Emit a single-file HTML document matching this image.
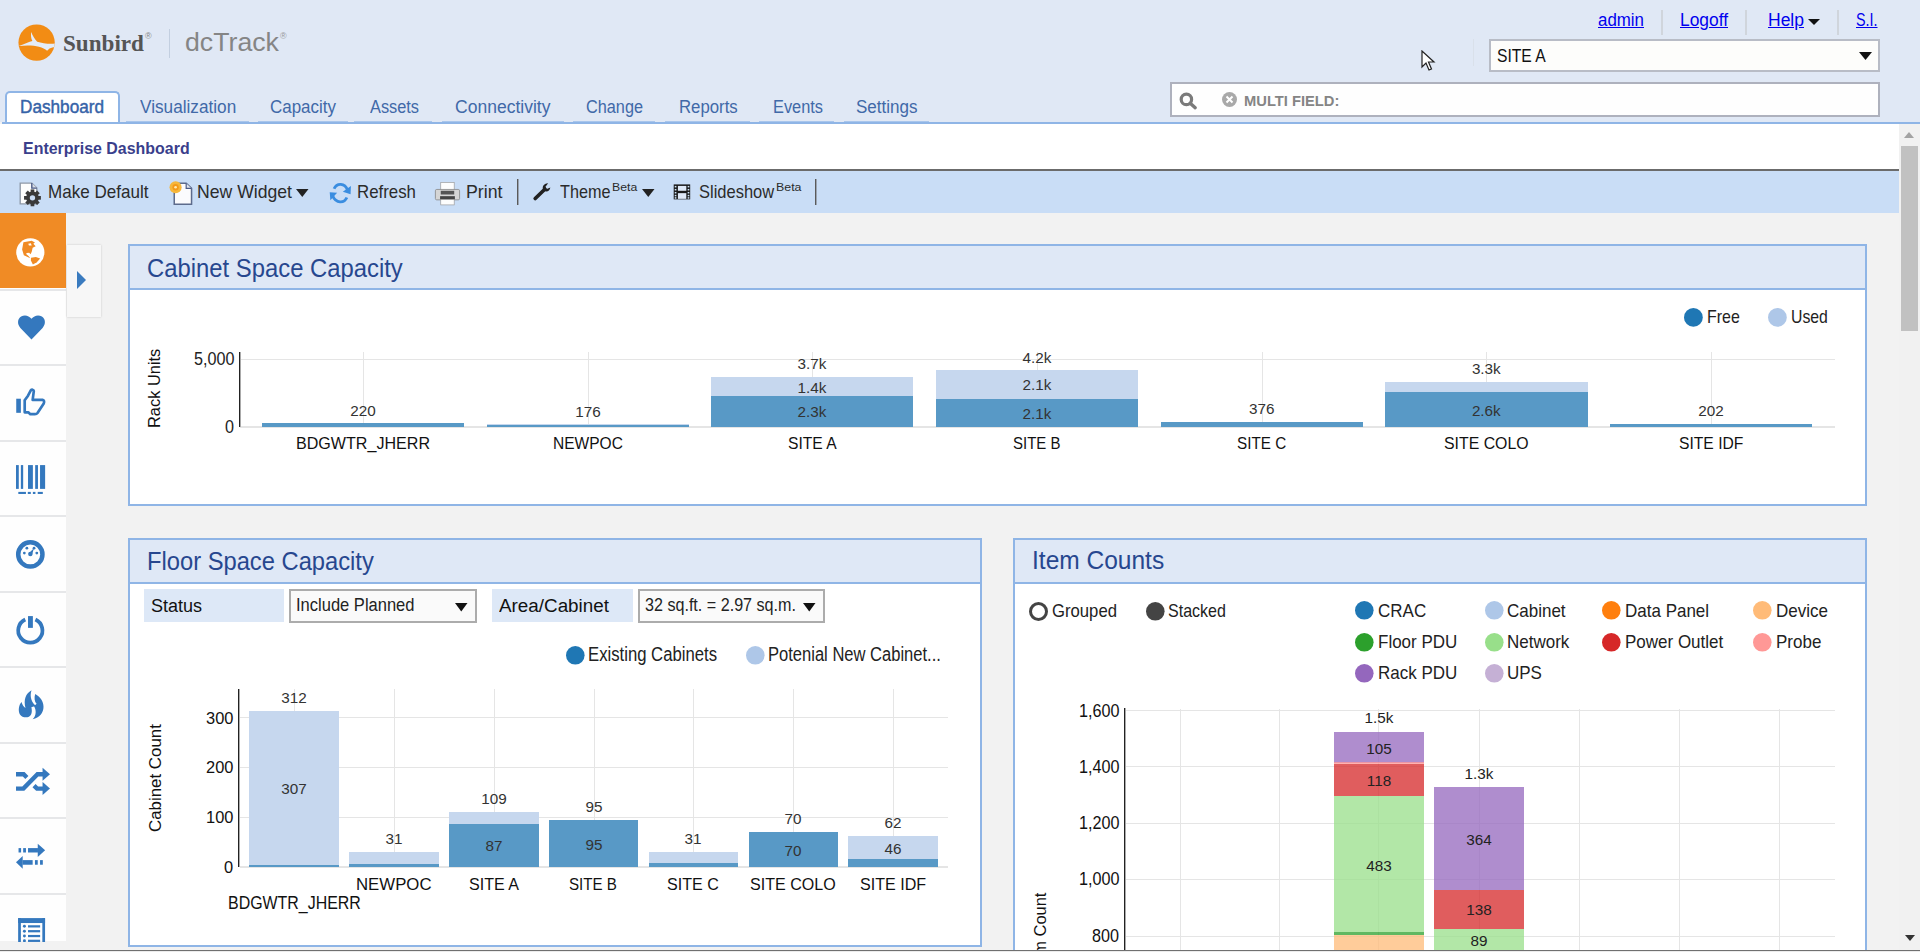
<!DOCTYPE html><html><head><meta charset="utf-8"><style>
html,body{margin:0;padding:0;width:1920px;height:952px;overflow:hidden;background:#f2f2f2;font-family:"Liberation Sans",sans-serif;}
.t{position:absolute;white-space:nowrap;transform-origin:0 0;}
.r{position:absolute;}
</style></head><body>
<div class="r" style="left:0px;top:0px;width:1920px;height:122px;background:#e0e8f5;"></div>
<svg class="r" style="left:16px;top:22px" width="42" height="42" viewBox="0 0 952 952">
<defs><clipPath id="lc"><circle cx="467" cy="467" r="412"/></clipPath></defs>
<circle cx="467" cy="467" r="412" fill="#f28c14"/>
<path clip-path="url(#lc)" d="M345,225 C330,300 345,380 372,432 C300,452 200,500 60,545 C250,520 400,530 520,560 C600,580 660,610 705,650 L760,600 C810,585 860,575 900,565 L900,485 C760,505 600,480 480,445 C420,385 370,300 345,225 Z" fill="#e4ecf7"/>
</svg>
<div class="t" style="left:63.0px;top:32.0px;font-size:23.87px;line-height:23.87px;color:#555;font-weight:700;font-family:'Liberation Serif', serif;transform:scaleX(0.969);">Sunbird</div>
<div class="t" style="left:145.0px;top:32.0px;font-size:9.00px;line-height:9.00px;color:#888;font-weight:400;font-family:'Liberation Sans', sans-serif;transform:scaleX(1.000);">&#174;</div>
<div class="r" style="left:169px;top:29px;width:1px;height:29px;background:#c3cfe0;"></div>
<div class="r" style="left:1473px;top:39px;width:1px;height:27px;background:#d9e0ea;"></div>
<div class="t" style="left:185.0px;top:30.0px;font-size:25.87px;line-height:25.87px;color:#858585;font-weight:400;font-family:'Liberation Sans', sans-serif;transform:scaleX(1.032);">dcTrack</div>
<div class="t" style="left:280.0px;top:32.0px;font-size:9.00px;line-height:9.00px;color:#999;font-weight:400;font-family:'Liberation Sans', sans-serif;transform:scaleX(1.000);">&#174;</div>
<div class="t" style="left:1598.0px;top:12.0px;font-size:17.50px;line-height:17.50px;color:#0000ee;font-weight:400;font-family:'Liberation Sans', sans-serif;transform:scaleX(0.965);text-decoration:underline;text-underline-offset:1px;">admin</div>
<div class="t" style="left:1680.0px;top:12.0px;font-size:17.50px;line-height:17.50px;color:#0000ee;font-weight:400;font-family:'Liberation Sans', sans-serif;transform:scaleX(0.993);text-decoration:underline;text-underline-offset:1px;">Logoff</div>
<div class="t" style="left:1768.0px;top:12.0px;font-size:17.50px;line-height:17.50px;color:#0000ee;font-weight:400;font-family:'Liberation Sans', sans-serif;transform:scaleX(1.000);text-decoration:underline;text-underline-offset:1px;">Help</div>
<div class="t" style="left:1856.0px;top:12.0px;font-size:17.50px;line-height:17.50px;color:#0000ee;font-weight:400;font-family:'Liberation Sans', sans-serif;transform:scaleX(0.819);text-decoration:underline;text-underline-offset:1px;">S.I.</div>
<svg class="r" style="left:1808px;top:19px" width="13" height="7"><path d="M0 0H12L6 6Z" fill="#111"/></svg>
<div class="r" style="left:1661px;top:10px;width:2px;height:25px;background:#d0d5dc;"></div>
<div class="r" style="left:1745px;top:10px;width:2px;height:25px;background:#d0d5dc;"></div>
<div class="r" style="left:1837px;top:10px;width:2px;height:25px;background:#d0d5dc;"></div>
<div class="r" style="left:1489px;top:39px;width:391px;height:33px;background:#fdfdfb;border:2px solid #b8bcc6;box-sizing:border-box;"></div>
<div class="t" style="left:1496.5px;top:47.0px;font-size:18.80px;line-height:18.80px;color:#111;font-weight:400;font-family:'Liberation Sans', sans-serif;transform:scaleX(0.834);">SITE A</div>
<svg class="r" style="left:1859px;top:52px" width="14" height="9"><path d="M0 0H13L6.5 8Z" fill="#111"/></svg>
<svg class="r" style="left:1421px;top:50px" width="16" height="22" viewBox="0 0 16 22"><path d="M1 1 L1 17 L5 13 L8 20 L10.5 19 L7.5 12 L13 12 Z" fill="#fff" stroke="#222" stroke-width="1.2"/></svg>
<div class="r" style="left:1170px;top:82px;width:710px;height:35px;background:#fefefe;border:2px solid #aeb1bd;box-sizing:border-box;"></div>
<svg class="r" style="left:1177px;top:90px" width="22" height="22" viewBox="0 0 22 22"><circle cx="9.4" cy="9.4" r="5.2" fill="none" stroke="#7a7a7a" stroke-width="3.2"/><path d="M13.2 13.2 L18.2 17.7" stroke="#7a7a7a" stroke-width="3.4" stroke-linecap="round"/></svg>
<svg class="r" style="left:1221px;top:91px" width="17" height="17" viewBox="0 0 17 17"><circle cx="8.5" cy="8.5" r="7.5" fill="#a9a9a9"/><path d="M5.5 5.5 L11.5 11.5 M11.5 5.5 L5.5 11.5" stroke="#fff" stroke-width="2"/></svg>
<div class="t" style="left:1243.7px;top:93.0px;font-size:15.41px;line-height:15.41px;color:#858585;font-weight:700;font-family:'Liberation Sans', sans-serif;transform:scaleX(0.955);">MULTI FIELD:</div>
<div class="r" style="left:5px;top:91px;width:115px;height:32px;background:#fff;border:2px solid #8fb5e6;border-bottom:none;border-radius:5px 5px 0 0;box-sizing:border-box;"></div>
<div class="r" style="left:0px;top:124px;width:1899px;height:45px;background:#ffffff;"></div>
<div class="r" style="left:2px;top:122px;width:1918px;height:2px;background:#8fb5e6;"></div>
<div class="t" style="left:20.0px;top:98.0px;font-size:18.90px;line-height:18.90px;color:#3563a8;font-weight:400;font-family:'Liberation Sans', sans-serif;transform:scaleX(0.909);-webkit-text-stroke:0.45px #3563a8;">Dashboard</div>
<div class="t" style="left:139.5px;top:98.0px;font-size:18.90px;line-height:18.90px;color:#4169a8;font-weight:400;font-family:'Liberation Sans', sans-serif;transform:scaleX(0.910);">Visualization</div>
<div class="r" style="left:126px;top:121px;width:123px;height:1px;background:#a9c6ec;"></div>
<div class="t" style="left:270.0px;top:98.0px;font-size:18.90px;line-height:18.90px;color:#4169a8;font-weight:400;font-family:'Liberation Sans', sans-serif;transform:scaleX(0.898);">Capacity</div>
<div class="r" style="left:258px;top:121px;width:90px;height:1px;background:#a9c6ec;"></div>
<div class="t" style="left:370.0px;top:98.0px;font-size:18.90px;line-height:18.90px;color:#4169a8;font-weight:400;font-family:'Liberation Sans', sans-serif;transform:scaleX(0.864);">Assets</div>
<div class="r" style="left:354px;top:121px;width:78px;height:1px;background:#a9c6ec;"></div>
<div class="t" style="left:455.0px;top:98.0px;font-size:18.90px;line-height:18.90px;color:#4169a8;font-weight:400;font-family:'Liberation Sans', sans-serif;transform:scaleX(0.928);">Connectivity</div>
<div class="r" style="left:442px;top:121px;width:122px;height:1px;background:#a9c6ec;"></div>
<div class="t" style="left:586.0px;top:98.0px;font-size:18.90px;line-height:18.90px;color:#4169a8;font-weight:400;font-family:'Liberation Sans', sans-serif;transform:scaleX(0.861);">Change</div>
<div class="r" style="left:573px;top:121px;width:82px;height:1px;background:#a9c6ec;"></div>
<div class="t" style="left:678.8px;top:98.0px;font-size:18.90px;line-height:18.90px;color:#4169a8;font-weight:400;font-family:'Liberation Sans', sans-serif;transform:scaleX(0.888);">Reports</div>
<div class="r" style="left:665px;top:121px;width:85px;height:1px;background:#a9c6ec;"></div>
<div class="t" style="left:772.5px;top:98.0px;font-size:18.90px;line-height:18.90px;color:#4169a8;font-weight:400;font-family:'Liberation Sans', sans-serif;transform:scaleX(0.866);">Events</div>
<div class="r" style="left:759px;top:121px;width:75px;height:1px;background:#a9c6ec;"></div>
<div class="t" style="left:856.0px;top:98.0px;font-size:18.90px;line-height:18.90px;color:#4169a8;font-weight:400;font-family:'Liberation Sans', sans-serif;transform:scaleX(0.901);">Settings</div>
<div class="r" style="left:844px;top:121px;width:85px;height:1px;background:#a9c6ec;"></div>
<div class="t" style="left:22.7px;top:140.0px;font-size:17.08px;line-height:17.08px;color:#3a3f8c;font-weight:700;font-family:'Liberation Sans', sans-serif;transform:scaleX(0.934);">Enterprise Dashboard</div>
<div class="r" style="left:0px;top:169px;width:1899px;height:2px;background:#6b6b6b;"></div>
<div class="r" style="left:0px;top:171px;width:1899px;height:42px;background:#c9ddf6;"></div>
<div class="t" style="left:47.5px;top:184.0px;font-size:17.73px;line-height:17.73px;color:#2b2b2b;font-weight:400;font-family:'Liberation Sans', sans-serif;transform:scaleX(0.962);">Make Default</div>
<div class="t" style="left:197.0px;top:184.0px;font-size:17.73px;line-height:17.73px;color:#2b2b2b;font-weight:400;font-family:'Liberation Sans', sans-serif;transform:scaleX(0.994);">New Widget</div>
<div class="t" style="left:357.0px;top:184.0px;font-size:17.73px;line-height:17.73px;color:#2b2b2b;font-weight:400;font-family:'Liberation Sans', sans-serif;transform:scaleX(0.950);">Refresh</div>
<div class="t" style="left:465.5px;top:184.0px;font-size:17.73px;line-height:17.73px;color:#2b2b2b;font-weight:400;font-family:'Liberation Sans', sans-serif;transform:scaleX(1.001);">Print</div>
<div class="t" style="left:559.5px;top:184.0px;font-size:17.73px;line-height:17.73px;color:#2b2b2b;font-weight:400;font-family:'Liberation Sans', sans-serif;transform:scaleX(0.915);">Theme</div>
<div class="t" style="left:611.8px;top:181.0px;font-size:11.77px;line-height:11.77px;color:#2b2b2b;font-weight:400;font-family:'Liberation Sans', sans-serif;transform:scaleX(1.043);">Beta</div>
<div class="t" style="left:698.8px;top:184.0px;font-size:17.73px;line-height:17.73px;color:#2b2b2b;font-weight:400;font-family:'Liberation Sans', sans-serif;transform:scaleX(0.931);">Slideshow</div>
<div class="t" style="left:775.5px;top:181.0px;font-size:11.77px;line-height:11.77px;color:#2b2b2b;font-weight:400;font-family:'Liberation Sans', sans-serif;transform:scaleX(1.053);">Beta</div>
<div class="r" style="left:517px;top:179px;width:1px;height:26px;background:#5a5a5a;"></div>
<div class="r" style="left:518px;top:179px;width:1px;height:26px;background:#9aa4b2;"></div>
<div class="r" style="left:815px;top:179px;width:1px;height:26px;background:#5a5a5a;"></div>
<div class="r" style="left:816px;top:179px;width:1px;height:26px;background:#9aa4b2;"></div>
<svg class="r" style="left:296px;top:189px" width="13" height="9"><path d="M0 0H12.5L6.25 8Z" fill="#222"/></svg>
<svg class="r" style="left:642px;top:189px" width="13" height="9"><path d="M0 0H12.5L6.25 8Z" fill="#222"/></svg>
<div class="r" style="left:0px;top:213px;width:1899px;height:737px;background:#f2f2f2;"></div>
<div class="r" style="left:0px;top:213px;width:66px;height:728px;background:#fefefe;"></div>
<div class="r" style="left:0px;top:213px;width:66px;height:75px;background:#f08b25;"></div>
<div class="r" style="left:0px;top:289px;width:66px;height:2px;background:#e6e7e9;"></div>
<div class="r" style="left:0px;top:364px;width:66px;height:2px;background:#e6e7e9;"></div>
<div class="r" style="left:0px;top:440px;width:66px;height:2px;background:#e6e7e9;"></div>
<div class="r" style="left:0px;top:515px;width:66px;height:2px;background:#e6e7e9;"></div>
<div class="r" style="left:0px;top:591px;width:66px;height:2px;background:#e6e7e9;"></div>
<div class="r" style="left:0px;top:666px;width:66px;height:2px;background:#e6e7e9;"></div>
<div class="r" style="left:0px;top:742px;width:66px;height:2px;background:#e6e7e9;"></div>
<div class="r" style="left:0px;top:817px;width:66px;height:2px;background:#e6e7e9;"></div>
<div class="r" style="left:0px;top:893px;width:66px;height:2px;background:#e6e7e9;"></div>
<div class="r" style="left:67px;top:245px;width:34px;height:72px;background:#f7f7f7;box-shadow:0 0 2px rgba(0,0,0,0.18);"></div>
<svg class="r" style="left:77px;top:271px" width="10" height="18"><path d="M0 0L9 9L0 18Z" fill="#3a7bbf"/></svg>
<div class="r" style="left:128px;top:244px;width:1739px;height:262px;background:#ffffff;border:2px solid #8fb5e6;box-sizing:border-box;"></div>
<div class="r" style="left:130px;top:246px;width:1735px;height:42px;background:#dfe8f6;"></div>
<div class="r" style="left:130px;top:288px;width:1735px;height:2px;background:#8fb5e6;"></div>
<div class="t" style="left:146.5px;top:256.0px;font-size:25.58px;line-height:25.58px;color:#27478f;font-weight:400;font-family:'Liberation Sans', sans-serif;transform:scaleX(0.932);">Cabinet Space Capacity</div>
<div class="r" style="left:128px;top:538px;width:854px;height:409px;background:#ffffff;border:2px solid #8fb5e6;box-sizing:border-box;"></div>
<div class="r" style="left:130px;top:540px;width:850px;height:42px;background:#dfe8f6;"></div>
<div class="r" style="left:130px;top:582px;width:850px;height:2px;background:#8fb5e6;"></div>
<div class="t" style="left:146.7px;top:548.0px;font-size:26.16px;line-height:26.16px;color:#27478f;font-weight:400;font-family:'Liberation Sans', sans-serif;transform:scaleX(0.907);">Floor Space Capacity</div>
<div class="r" style="left:1013px;top:538px;width:854px;height:422px;background:#ffffff;border:2px solid #8fb5e6;box-sizing:border-box;"></div>
<div class="r" style="left:1015px;top:540px;width:850px;height:42px;background:#dfe8f6;"></div>
<div class="r" style="left:1015px;top:582px;width:850px;height:2px;background:#8fb5e6;"></div>
<div class="t" style="left:1031.7px;top:549.0px;font-size:24.85px;line-height:24.85px;color:#27478f;font-weight:400;font-family:'Liberation Sans', sans-serif;transform:scaleX(0.987);">Item Counts</div>
<div class="r" style="left:240px;top:359px;width:1595px;height:1px;background:#e5e5e5;"></div>
<div class="r" style="left:240px;top:426px;width:1595px;height:2px;background:#e5e5e5;"></div>
<div class="r" style="left:363px;top:352px;width:1px;height:75px;background:#e5e5e5;"></div>
<div class="r" style="left:588px;top:352px;width:1px;height:75px;background:#e5e5e5;"></div>
<div class="r" style="left:812px;top:352px;width:1px;height:75px;background:#e5e5e5;"></div>
<div class="r" style="left:1037px;top:352px;width:1px;height:75px;background:#e5e5e5;"></div>
<div class="r" style="left:1262px;top:352px;width:1px;height:75px;background:#e5e5e5;"></div>
<div class="r" style="left:1486px;top:352px;width:1px;height:75px;background:#e5e5e5;"></div>
<div class="r" style="left:1711px;top:352px;width:1px;height:75px;background:#e5e5e5;"></div>
<div class="r" style="left:239px;top:352px;width:1px;height:75px;background:#222;"></div>
<div class="r" style="left:240px;top:352px;width:1px;height:75px;background:#aaa;"></div>
<div class="r" style="left:262px;top:423px;width:202px;height:4px;background:#5899c6;"></div>
<div class="r" style="left:487px;top:424px;width:202px;height:3px;background:#c6d7ee;"></div>
<div class="r" style="left:487px;top:425px;width:202px;height:2px;background:#5899c6;"></div>
<div class="r" style="left:711px;top:377px;width:202px;height:50px;background:#c6d7ee;"></div>
<div class="r" style="left:711px;top:396px;width:202px;height:31px;background:#5899c6;"></div>
<div class="r" style="left:936px;top:370px;width:202px;height:57px;background:#c6d7ee;"></div>
<div class="r" style="left:936px;top:399px;width:202px;height:28px;background:#5899c6;"></div>
<div class="r" style="left:1161px;top:422px;width:201.5px;height:5px;background:#5899c6;"></div>
<div class="r" style="left:1385px;top:382px;width:202.5px;height:45px;background:#c6d7ee;"></div>
<div class="r" style="left:1385px;top:392px;width:202.5px;height:35px;background:#5899c6;"></div>
<div class="r" style="left:1610px;top:424px;width:202px;height:3px;background:#5899c6;"></div>
<div class="t" style="left:295.9px;top:436.0px;font-size:16.72px;line-height:16.72px;color:#111;font-weight:400;font-family:'Liberation Sans', sans-serif;transform:scaleX(0.963);">BDGWTR_JHERR</div>
<div class="t" style="left:553.0px;top:436.0px;font-size:16.72px;line-height:16.72px;color:#111;font-weight:400;font-family:'Liberation Sans', sans-serif;transform:scaleX(0.930);">NEWPOC</div>
<div class="t" style="left:787.9px;top:436.0px;font-size:16.72px;line-height:16.72px;color:#111;font-weight:400;font-family:'Liberation Sans', sans-serif;transform:scaleX(0.936);">SITE A</div>
<div class="t" style="left:1012.9px;top:436.0px;font-size:16.72px;line-height:16.72px;color:#111;font-weight:400;font-family:'Liberation Sans', sans-serif;transform:scaleX(0.897);">SITE B</div>
<div class="t" style="left:1236.8px;top:436.0px;font-size:16.72px;line-height:16.72px;color:#111;font-weight:400;font-family:'Liberation Sans', sans-serif;transform:scaleX(0.913);">SITE C</div>
<div class="t" style="left:1443.8px;top:436.0px;font-size:16.72px;line-height:16.72px;color:#111;font-weight:400;font-family:'Liberation Sans', sans-serif;transform:scaleX(0.949);">SITE COLO</div>
<div class="t" style="left:1678.6px;top:436.0px;font-size:16.72px;line-height:16.72px;color:#111;font-weight:400;font-family:'Liberation Sans', sans-serif;transform:scaleX(0.937);">SITE IDF</div>
<div class="t" style="left:350.3px;top:403.0px;font-size:15.26px;line-height:15.26px;color:#333;font-weight:400;font-family:'Liberation Sans', sans-serif;transform:scaleX(1.000);">220</div>
<div class="t" style="left:575.3px;top:404.0px;font-size:15.26px;line-height:15.26px;color:#333;font-weight:400;font-family:'Liberation Sans', sans-serif;transform:scaleX(1.000);">176</div>
<div class="t" style="left:797.6px;top:356.0px;font-size:15.26px;line-height:15.26px;color:#333;font-weight:400;font-family:'Liberation Sans', sans-serif;transform:scaleX(1.000);">3.7k</div>
<div class="t" style="left:797.6px;top:380.0px;font-size:15.26px;line-height:15.26px;color:#333;font-weight:400;font-family:'Liberation Sans', sans-serif;transform:scaleX(1.000);">1.4k</div>
<div class="t" style="left:797.6px;top:404.0px;font-size:15.26px;line-height:15.26px;color:#333;font-weight:400;font-family:'Liberation Sans', sans-serif;transform:scaleX(1.000);">2.3k</div>
<div class="t" style="left:1022.6px;top:350.0px;font-size:15.26px;line-height:15.26px;color:#333;font-weight:400;font-family:'Liberation Sans', sans-serif;transform:scaleX(1.000);">4.2k</div>
<div class="t" style="left:1022.6px;top:377.0px;font-size:15.26px;line-height:15.26px;color:#333;font-weight:400;font-family:'Liberation Sans', sans-serif;transform:scaleX(1.000);">2.1k</div>
<div class="t" style="left:1022.6px;top:406.0px;font-size:15.26px;line-height:15.26px;color:#333;font-weight:400;font-family:'Liberation Sans', sans-serif;transform:scaleX(1.000);">2.1k</div>
<div class="t" style="left:1249.0px;top:401.0px;font-size:15.26px;line-height:15.26px;color:#333;font-weight:400;font-family:'Liberation Sans', sans-serif;transform:scaleX(1.000);">376</div>
<div class="t" style="left:1471.9px;top:361.0px;font-size:15.26px;line-height:15.26px;color:#333;font-weight:400;font-family:'Liberation Sans', sans-serif;transform:scaleX(1.000);">3.3k</div>
<div class="t" style="left:1471.9px;top:403.0px;font-size:15.26px;line-height:15.26px;color:#333;font-weight:400;font-family:'Liberation Sans', sans-serif;transform:scaleX(1.000);">2.6k</div>
<div class="t" style="left:1698.3px;top:403.0px;font-size:15.26px;line-height:15.26px;color:#333;font-weight:400;font-family:'Liberation Sans', sans-serif;transform:scaleX(1.000);">202</div>
<div class="t" style="left:193.5px;top:351.0px;font-size:17.59px;line-height:17.59px;color:#222;font-weight:400;font-family:'Liberation Sans', sans-serif;transform:scaleX(0.920);">5,000</div>
<div class="t" style="left:225.0px;top:419.0px;font-size:17.59px;line-height:17.59px;color:#222;font-weight:400;font-family:'Liberation Sans', sans-serif;transform:scaleX(0.920);">0</div>
<div class='t' style="left:146.2px;top:428.2px;font-size:17.30px;line-height:17.30px;color:#111;transform:rotate(-90deg) scaleX(0.949);">Rack Units</div>
<svg class="r" style="left:1682.6px;top:306.6px" width="20.8" height="20.8"><circle cx="10.4" cy="10.4" r="9.4" fill="#1f77b4"/></svg>
<div class="t" style="left:1706.7px;top:307.0px;font-size:19.04px;line-height:19.04px;color:#222;font-weight:400;font-family:'Liberation Sans', sans-serif;transform:scaleX(0.838);">Free</div>
<svg class="r" style="left:1766.6px;top:306.6px" width="20.8" height="20.8"><circle cx="10.4" cy="10.4" r="9.4" fill="#aec7e8"/></svg>
<div class="t" style="left:1790.5px;top:307.0px;font-size:19.04px;line-height:19.04px;color:#222;font-weight:400;font-family:'Liberation Sans', sans-serif;transform:scaleX(0.830);">Used</div>
<div class="r" style="left:144px;top:589px;width:140px;height:33px;background:#dde8f7;"></div>
<div class="t" style="left:150.5px;top:596.0px;font-size:19.19px;line-height:19.19px;color:#111;font-weight:400;font-family:'Liberation Sans', sans-serif;transform:scaleX(0.939);">Status</div>
<div class="r" style="left:289px;top:589px;width:188px;height:34px;background:#fafafa;border:2px solid #acacac;box-sizing:border-box;"></div>
<div class="t" style="left:296.0px;top:596.0px;font-size:18.46px;line-height:18.46px;color:#222;font-weight:400;font-family:'Liberation Sans', sans-serif;transform:scaleX(0.896);">Include Planned</div>
<svg class="r" style="left:455px;top:603px" width="13" height="9"><path d="M0 0H12.5L6.25 8.5Z" fill="#111"/></svg>
<div class="r" style="left:492px;top:589px;width:141px;height:33px;background:#dde8f7;"></div>
<div class="t" style="left:499.0px;top:596.0px;font-size:19.19px;line-height:19.19px;color:#111;font-weight:400;font-family:'Liberation Sans', sans-serif;transform:scaleX(0.982);">Area/Cabinet</div>
<div class="r" style="left:638px;top:589px;width:187px;height:34px;background:#fafafa;border:2px solid #acacac;box-sizing:border-box;"></div>
<div class="t" style="left:644.5px;top:596.0px;font-size:18.46px;line-height:18.46px;color:#222;font-weight:400;font-family:'Liberation Sans', sans-serif;transform:scaleX(0.874);">32 sq.ft. = 2.97 sq.m.</div>
<svg class="r" style="left:803px;top:603px" width="13" height="9"><path d="M0 0H12.5L6.25 8.5Z" fill="#111"/></svg>
<svg class="r" style="left:564.7px;top:644.9px" width="20.6" height="20.6"><circle cx="10.3" cy="10.3" r="9.3" fill="#1f77b4"/></svg>
<div class="t" style="left:588.0px;top:645.0px;font-size:19.33px;line-height:19.33px;color:#222;font-weight:400;font-family:'Liberation Sans', sans-serif;transform:scaleX(0.864);">Existing Cabinets</div>
<svg class="r" style="left:744.7px;top:644.9px" width="20.6" height="20.6"><circle cx="10.3" cy="10.3" r="9.3" fill="#aec7e8"/></svg>
<div class="t" style="left:768.0px;top:645.0px;font-size:19.33px;line-height:19.33px;color:#222;font-weight:400;font-family:'Liberation Sans', sans-serif;transform:scaleX(0.856);">Potenial New Cabinet...</div>
<div class="r" style="left:240px;top:717px;width:708px;height:1px;background:#e5e5e5;"></div>
<div class="r" style="left:240px;top:767px;width:708px;height:1px;background:#e5e5e5;"></div>
<div class="r" style="left:240px;top:817px;width:708px;height:1px;background:#e5e5e5;"></div>
<div class="r" style="left:240px;top:866px;width:708px;height:2px;background:#e5e5e5;"></div>
<div class="r" style="left:294px;top:689px;width:1px;height:178px;background:#e5e5e5;"></div>
<div class="r" style="left:394px;top:689px;width:1px;height:178px;background:#e5e5e5;"></div>
<div class="r" style="left:494px;top:689px;width:1px;height:178px;background:#e5e5e5;"></div>
<div class="r" style="left:594px;top:689px;width:1px;height:178px;background:#e5e5e5;"></div>
<div class="r" style="left:693px;top:689px;width:1px;height:178px;background:#e5e5e5;"></div>
<div class="r" style="left:793px;top:689px;width:1px;height:178px;background:#e5e5e5;"></div>
<div class="r" style="left:893px;top:689px;width:1px;height:178px;background:#e5e5e5;"></div>
<div class="r" style="left:238px;top:689px;width:1px;height:178px;background:#222;"></div>
<div class="r" style="left:239px;top:689px;width:1px;height:178px;background:#aaa;"></div>
<div class="r" style="left:249px;top:711px;width:90px;height:156px;background:#c6d7ee;"></div>
<div class="r" style="left:249px;top:865px;width:90px;height:2px;background:#5899c6;"></div>
<div class="r" style="left:349px;top:852px;width:90px;height:15px;background:#c6d7ee;"></div>
<div class="r" style="left:349px;top:864px;width:90px;height:3px;background:#5899c6;"></div>
<div class="r" style="left:449px;top:812px;width:90px;height:55px;background:#c6d7ee;"></div>
<div class="r" style="left:449px;top:824px;width:90px;height:43px;background:#5899c6;"></div>
<div class="r" style="left:549px;top:820px;width:89.39999999999998px;height:47px;background:#5899c6;"></div>
<div class="r" style="left:648.5px;top:852px;width:89.5px;height:15px;background:#c6d7ee;"></div>
<div class="r" style="left:648.5px;top:863px;width:89.5px;height:4px;background:#5899c6;"></div>
<div class="r" style="left:748.6px;top:832px;width:89.39999999999998px;height:35px;background:#5899c6;"></div>
<div class="r" style="left:848.2px;top:836px;width:89.5px;height:31px;background:#c6d7ee;"></div>
<div class="r" style="left:848.2px;top:859px;width:89.5px;height:8px;background:#5899c6;"></div>
<div class="t" style="left:281.3px;top:690.0px;font-size:15.26px;line-height:15.26px;color:#333;font-weight:400;font-family:'Liberation Sans', sans-serif;transform:scaleX(1.000);">312</div>
<div class="t" style="left:281.3px;top:781.0px;font-size:15.26px;line-height:15.26px;color:#333;font-weight:400;font-family:'Liberation Sans', sans-serif;transform:scaleX(1.000);">307</div>
<div class="t" style="left:385.5px;top:831.0px;font-size:15.26px;line-height:15.26px;color:#333;font-weight:400;font-family:'Liberation Sans', sans-serif;transform:scaleX(1.000);">31</div>
<div class="t" style="left:481.3px;top:791.0px;font-size:15.26px;line-height:15.26px;color:#333;font-weight:400;font-family:'Liberation Sans', sans-serif;transform:scaleX(1.000);">109</div>
<div class="t" style="left:485.5px;top:838.0px;font-size:15.26px;line-height:15.26px;color:#333;font-weight:400;font-family:'Liberation Sans', sans-serif;transform:scaleX(1.000);">87</div>
<div class="t" style="left:585.5px;top:799.0px;font-size:15.26px;line-height:15.26px;color:#333;font-weight:400;font-family:'Liberation Sans', sans-serif;transform:scaleX(1.000);">95</div>
<div class="t" style="left:585.5px;top:837.0px;font-size:15.26px;line-height:15.26px;color:#333;font-weight:400;font-family:'Liberation Sans', sans-serif;transform:scaleX(1.000);">95</div>
<div class="t" style="left:684.5px;top:831.0px;font-size:15.26px;line-height:15.26px;color:#333;font-weight:400;font-family:'Liberation Sans', sans-serif;transform:scaleX(1.000);">31</div>
<div class="t" style="left:784.5px;top:811.0px;font-size:15.26px;line-height:15.26px;color:#333;font-weight:400;font-family:'Liberation Sans', sans-serif;transform:scaleX(1.000);">70</div>
<div class="t" style="left:784.5px;top:843.0px;font-size:15.26px;line-height:15.26px;color:#333;font-weight:400;font-family:'Liberation Sans', sans-serif;transform:scaleX(1.000);">70</div>
<div class="t" style="left:884.5px;top:815.0px;font-size:15.26px;line-height:15.26px;color:#333;font-weight:400;font-family:'Liberation Sans', sans-serif;transform:scaleX(1.000);">62</div>
<div class="t" style="left:884.5px;top:841.0px;font-size:15.26px;line-height:15.26px;color:#333;font-weight:400;font-family:'Liberation Sans', sans-serif;transform:scaleX(1.000);">46</div>
<div class="t" style="left:206.1px;top:710.0px;font-size:17.30px;line-height:17.30px;color:#111;font-weight:400;font-family:'Liberation Sans', sans-serif;transform:scaleX(0.950);">300</div>
<div class="t" style="left:206.1px;top:759.0px;font-size:17.30px;line-height:17.30px;color:#111;font-weight:400;font-family:'Liberation Sans', sans-serif;transform:scaleX(0.950);">200</div>
<div class="t" style="left:206.1px;top:809.0px;font-size:17.30px;line-height:17.30px;color:#111;font-weight:400;font-family:'Liberation Sans', sans-serif;transform:scaleX(0.950);">100</div>
<div class="t" style="left:224.4px;top:859.0px;font-size:17.30px;line-height:17.30px;color:#111;font-weight:400;font-family:'Liberation Sans', sans-serif;transform:scaleX(0.950);">0</div>
<div class="t" style="left:356.3px;top:876.0px;font-size:17.30px;line-height:17.30px;color:#111;font-weight:400;font-family:'Liberation Sans', sans-serif;transform:scaleX(0.971);">NEWPOC</div>
<div class="t" style="left:469.0px;top:876.0px;font-size:17.30px;line-height:17.30px;color:#111;font-weight:400;font-family:'Liberation Sans', sans-serif;transform:scaleX(0.930);">SITE A</div>
<div class="t" style="left:569.3px;top:876.0px;font-size:17.30px;line-height:17.30px;color:#111;font-weight:400;font-family:'Liberation Sans', sans-serif;transform:scaleX(0.876);">SITE B</div>
<div class="t" style="left:667.1px;top:876.0px;font-size:17.30px;line-height:17.30px;color:#111;font-weight:400;font-family:'Liberation Sans', sans-serif;transform:scaleX(0.930);">SITE C</div>
<div class="t" style="left:750.1px;top:876.0px;font-size:17.30px;line-height:17.30px;color:#111;font-weight:400;font-family:'Liberation Sans', sans-serif;transform:scaleX(0.930);">SITE COLO</div>
<div class="t" style="left:859.9px;top:876.0px;font-size:17.30px;line-height:17.30px;color:#111;font-weight:400;font-family:'Liberation Sans', sans-serif;transform:scaleX(0.930);">SITE IDF</div>
<div class="t" style="left:227.7px;top:895.0px;font-size:17.59px;line-height:17.59px;color:#111;font-weight:400;font-family:'Liberation Sans', sans-serif;transform:scaleX(0.907);">BDGWTR_JHERR</div>
<div class='t' style="left:146.7px;top:832.0px;font-size:17.30px;line-height:17.30px;color:#111;transform:rotate(-90deg) scaleX(0.976);">Cabinet Count</div>
<svg class="r" style="left:1027.8px;top:600.6px" width="21.0" height="21.0"><circle cx="10.5" cy="10.5" r="8" fill="none" stroke="#444" stroke-width="3"/></svg>
<div class="t" style="left:1051.6px;top:602.0px;font-size:18.31px;line-height:18.31px;color:#222;font-weight:400;font-family:'Liberation Sans', sans-serif;transform:scaleX(0.912);">Grouped</div>
<svg class="r" style="left:1144.6px;top:600.8px" width="20.6" height="20.6"><circle cx="10.3" cy="10.3" r="9.3" fill="#444"/></svg>
<div class="t" style="left:1168.0px;top:602.0px;font-size:18.31px;line-height:18.31px;color:#222;font-weight:400;font-family:'Liberation Sans', sans-serif;transform:scaleX(0.876);">Stacked</div>
<svg class="r" style="left:1354.4px;top:600.2px" width="20.6" height="20.6"><circle cx="10.3" cy="10.3" r="9.3" fill="#1f77b4"/></svg>
<div class="t" style="left:1378.0px;top:602.0px;font-size:18.31px;line-height:18.31px;color:#222;font-weight:400;font-family:'Liberation Sans', sans-serif;transform:scaleX(0.929);">CRAC</div>
<svg class="r" style="left:1483.8px;top:600.2px" width="20.6" height="20.6"><circle cx="10.3" cy="10.3" r="9.3" fill="#aec7e8"/></svg>
<div class="t" style="left:1507.4px;top:602.0px;font-size:18.31px;line-height:18.31px;color:#222;font-weight:400;font-family:'Liberation Sans', sans-serif;transform:scaleX(0.929);">Cabinet</div>
<svg class="r" style="left:1601.1px;top:600.2px" width="20.6" height="20.6"><circle cx="10.3" cy="10.3" r="9.3" fill="#ff7f0e"/></svg>
<div class="t" style="left:1624.7px;top:602.0px;font-size:18.31px;line-height:18.31px;color:#222;font-weight:400;font-family:'Liberation Sans', sans-serif;transform:scaleX(0.929);">Data Panel</div>
<svg class="r" style="left:1752.4px;top:600.2px" width="20.6" height="20.6"><circle cx="10.3" cy="10.3" r="9.3" fill="#ffbb78"/></svg>
<div class="t" style="left:1776.0px;top:602.0px;font-size:18.31px;line-height:18.31px;color:#222;font-weight:400;font-family:'Liberation Sans', sans-serif;transform:scaleX(0.929);">Device</div>
<svg class="r" style="left:1354.4px;top:631.7px" width="20.6" height="20.6"><circle cx="10.3" cy="10.3" r="9.3" fill="#2ca02c"/></svg>
<div class="t" style="left:1378.0px;top:633.0px;font-size:18.31px;line-height:18.31px;color:#222;font-weight:400;font-family:'Liberation Sans', sans-serif;transform:scaleX(0.929);">Floor PDU</div>
<svg class="r" style="left:1483.8px;top:631.7px" width="20.6" height="20.6"><circle cx="10.3" cy="10.3" r="9.3" fill="#98df8a"/></svg>
<div class="t" style="left:1507.4px;top:633.0px;font-size:18.31px;line-height:18.31px;color:#222;font-weight:400;font-family:'Liberation Sans', sans-serif;transform:scaleX(0.929);">Network</div>
<svg class="r" style="left:1601.1px;top:631.7px" width="20.6" height="20.6"><circle cx="10.3" cy="10.3" r="9.3" fill="#d62728"/></svg>
<div class="t" style="left:1624.7px;top:633.0px;font-size:18.31px;line-height:18.31px;color:#222;font-weight:400;font-family:'Liberation Sans', sans-serif;transform:scaleX(0.929);">Power Outlet</div>
<svg class="r" style="left:1752.4px;top:631.7px" width="20.6" height="20.6"><circle cx="10.3" cy="10.3" r="9.3" fill="#ff9896"/></svg>
<div class="t" style="left:1776.0px;top:633.0px;font-size:18.31px;line-height:18.31px;color:#222;font-weight:400;font-family:'Liberation Sans', sans-serif;transform:scaleX(0.929);">Probe</div>
<svg class="r" style="left:1354.4px;top:662.7px" width="20.6" height="20.6"><circle cx="10.3" cy="10.3" r="9.3" fill="#9467bd"/></svg>
<div class="t" style="left:1378.0px;top:664.0px;font-size:18.31px;line-height:18.31px;color:#222;font-weight:400;font-family:'Liberation Sans', sans-serif;transform:scaleX(0.929);">Rack PDU</div>
<svg class="r" style="left:1483.8px;top:662.7px" width="20.6" height="20.6"><circle cx="10.3" cy="10.3" r="9.3" fill="#c5b0d5"/></svg>
<div class="t" style="left:1507.4px;top:664.0px;font-size:18.31px;line-height:18.31px;color:#222;font-weight:400;font-family:'Liberation Sans', sans-serif;transform:scaleX(0.929);">UPS</div>
<div class="r" style="left:1125px;top:710px;width:710px;height:1px;background:#e5e5e5;"></div>
<div class="r" style="left:1125px;top:766px;width:710px;height:1px;background:#e5e5e5;"></div>
<div class="r" style="left:1125px;top:823px;width:710px;height:1px;background:#e5e5e5;"></div>
<div class="r" style="left:1125px;top:879px;width:710px;height:1px;background:#e5e5e5;"></div>
<div class="r" style="left:1125px;top:936px;width:710px;height:1px;background:#e5e5e5;"></div>
<div class="r" style="left:1180px;top:709px;width:1px;height:241px;background:#e5e5e5;"></div>
<div class="r" style="left:1279px;top:709px;width:1px;height:241px;background:#e5e5e5;"></div>
<div class="r" style="left:1378px;top:709px;width:1px;height:241px;background:#e5e5e5;"></div>
<div class="r" style="left:1479px;top:709px;width:1px;height:241px;background:#e5e5e5;"></div>
<div class="r" style="left:1579px;top:709px;width:1px;height:241px;background:#e5e5e5;"></div>
<div class="r" style="left:1679px;top:709px;width:1px;height:241px;background:#e5e5e5;"></div>
<div class="r" style="left:1779px;top:709px;width:1px;height:241px;background:#e5e5e5;"></div>
<div class="r" style="left:1124px;top:708px;width:1px;height:242px;background:#222;"></div>
<div class="r" style="left:1125px;top:708px;width:1px;height:242px;background:#aaa;"></div>
<div class="t" style="left:1078.8px;top:703.0px;font-size:17.59px;line-height:17.59px;color:#111;font-weight:400;font-family:'Liberation Sans', sans-serif;transform:scaleX(0.920);">1,600</div>
<div class="t" style="left:1078.8px;top:759.0px;font-size:17.59px;line-height:17.59px;color:#111;font-weight:400;font-family:'Liberation Sans', sans-serif;transform:scaleX(0.920);">1,400</div>
<div class="t" style="left:1078.8px;top:815.0px;font-size:17.59px;line-height:17.59px;color:#111;font-weight:400;font-family:'Liberation Sans', sans-serif;transform:scaleX(0.920);">1,200</div>
<div class="t" style="left:1078.8px;top:871.0px;font-size:17.59px;line-height:17.59px;color:#111;font-weight:400;font-family:'Liberation Sans', sans-serif;transform:scaleX(0.920);">1,000</div>
<div class="t" style="left:1092.3px;top:928.0px;font-size:17.59px;line-height:17.59px;color:#111;font-weight:400;font-family:'Liberation Sans', sans-serif;transform:scaleX(0.920);">800</div>
<div class="r" style="left:1334px;top:732px;width:90px;height:31px;background:#9467bd;opacity:0.75;"></div>
<div class="r" style="left:1334px;top:762px;width:90px;height:2px;background:#ff9896;opacity:0.75;"></div>
<div class="r" style="left:1334px;top:764px;width:90px;height:32px;background:#d62728;opacity:0.75;"></div>
<div class="r" style="left:1334px;top:796px;width:90px;height:136px;background:#98df8a;opacity:0.75;"></div>
<div class="r" style="left:1334px;top:932px;width:90px;height:3px;background:#2ca02c;opacity:0.75;"></div>
<div class="r" style="left:1334px;top:935px;width:90px;height:15px;background:#ffbb78;opacity:0.75;"></div>
<div class="r" style="left:1434px;top:787px;width:90px;height:103px;background:#9467bd;opacity:0.75;"></div>
<div class="r" style="left:1434px;top:890px;width:90px;height:39px;background:#d62728;opacity:0.75;"></div>
<div class="r" style="left:1434px;top:929px;width:90px;height:21px;background:#98df8a;opacity:0.75;"></div>
<div class="t" style="left:1364.6px;top:710.0px;font-size:15.26px;line-height:15.26px;color:#222;font-weight:400;font-family:'Liberation Sans', sans-serif;transform:scaleX(1.000);">1.5k</div>
<div class="t" style="left:1366.3px;top:741.0px;font-size:15.26px;line-height:15.26px;color:#222;font-weight:400;font-family:'Liberation Sans', sans-serif;transform:scaleX(1.000);">105</div>
<div class="t" style="left:1366.8px;top:773.0px;font-size:15.26px;line-height:15.26px;color:#222;font-weight:400;font-family:'Liberation Sans', sans-serif;transform:scaleX(1.000);">118</div>
<div class="t" style="left:1366.3px;top:858.0px;font-size:15.26px;line-height:15.26px;color:#222;font-weight:400;font-family:'Liberation Sans', sans-serif;transform:scaleX(1.000);">483</div>
<div class="t" style="left:1464.6px;top:766.0px;font-size:15.26px;line-height:15.26px;color:#222;font-weight:400;font-family:'Liberation Sans', sans-serif;transform:scaleX(1.000);">1.3k</div>
<div class="t" style="left:1466.3px;top:832.0px;font-size:15.26px;line-height:15.26px;color:#222;font-weight:400;font-family:'Liberation Sans', sans-serif;transform:scaleX(1.000);">364</div>
<div class="t" style="left:1466.3px;top:902.0px;font-size:15.26px;line-height:15.26px;color:#222;font-weight:400;font-family:'Liberation Sans', sans-serif;transform:scaleX(1.000);">138</div>
<div class="t" style="left:1470.5px;top:933.0px;font-size:15.26px;line-height:15.26px;color:#222;font-weight:400;font-family:'Liberation Sans', sans-serif;transform:scaleX(1.000);">89</div>
<div class='t' style="left:1032.2px;top:973.0px;font-size:17.30px;line-height:17.30px;color:#111;transform:rotate(-90deg) scaleX(0.951);">Item Count</div>
<svg class="r" style="left:10px;top:230px" width="44" height="44" viewBox="0 0 952 952"><circle cx="440" cy="485" r="305" fill="#fff"/>
<path d="M290,265 L470,232 L540,268 L505,300 L555,352 L490,385 L470,470 L445,525 L415,490 L360,495 L350,520 L400,560 L440,610 L300,545 L262,420 Z" fill="#f08b25"/>
<path d="M395,300 L450,285 L470,335 L410,335 Z" fill="#fff"/>
<path d="M455,600 L560,585 L652,615 L580,700 L495,745 L452,660 Z" fill="#f08b25"/></svg>
<svg class="r" style="left:10px;top:305px" width="44" height="44" viewBox="0 0 952 952"><path d="M465,745 L225,495 C150,415 160,300 240,250 C320,200 410,230 465,300 C520,230 610,200 690,250 C770,300 780,415 705,495 Z" fill="#3478be"/></svg>
<svg class="r" style="left:10px;top:380px" width="44" height="44" viewBox="0 0 952 952"><rect x="135" y="405" width="100" height="305" fill="#3478be"/>
<path d="M318,440 L390,340 L450,225 C470,200 515,205 515,240 L490,430 L705,430 C740,435 745,470 730,510 L595,715 C580,735 565,740 540,740 L440,740 L395,700 L318,700 Z" fill="none" stroke="#3478be" stroke-width="58" stroke-linejoin="round"/></svg>
<svg class="r" style="left:10px;top:457px" width="44" height="44" viewBox="0 0 952 952"><g fill="#3478be"><rect x="130" y="175" width="60" height="515"/><rect x="235" y="175" width="50" height="515"/><rect x="390" y="175" width="105" height="515"/><rect x="545" y="175" width="60" height="515"/><rect x="650" y="175" width="110" height="515"/>
<rect x="180" y="755" width="165" height="45"/><rect x="385" y="755" width="65" height="45"/><rect x="495" y="755" width="55" height="45"/><rect x="600" y="755" width="110" height="45"/></g></svg>
<svg class="r" style="left:10px;top:532px" width="44" height="44" viewBox="0 0 952 952"><circle cx="440" cy="485" r="262" fill="none" stroke="#3478be" stroke-width="98"/>
<g fill="#3478be"><circle cx="365" cy="350" r="30"/><circle cx="520" cy="350" r="30"/><circle cx="310" cy="455" r="30"/><circle cx="580" cy="455" r="30"/><circle cx="440" cy="475" r="48"/></g>
<path d="M400,470 L520,345 L475,495 Z" fill="#3478be"/></svg>
<svg class="r" style="left:10px;top:608px" width="44" height="44" viewBox="0 0 952 952"><path d="M330,250 A262,262 0 1,0 550,250" fill="none" stroke="#3478be" stroke-width="82"/>
<rect x="390" y="175" width="105" height="255" fill="#3478be"/></svg>
<svg class="r" style="left:10px;top:684px" width="44" height="44" viewBox="0 0 952 952"><path d="M465,135 C340,210 290,330 335,520 C300,500 265,450 250,390 C190,450 170,580 215,660 C255,720 340,735 410,710 C470,680 485,600 462,505 L560,470 C470,400 420,280 465,135 Z M545,215 C520,290 530,380 575,430 L520,480 C570,560 575,680 490,760 C640,730 725,620 725,490 C725,380 660,280 545,215 Z" fill="#3478be"/></svg>
<svg class="r" style="left:10px;top:759px" width="44" height="44" viewBox="0 0 952 952"><g fill="none" stroke="#3478be" stroke-width="95" stroke-linejoin="miter"><path d="M130,330 H295 L365,400"/><path d="M130,640 H290 L595,330 H720"/><path d="M520,575 L585,640 H720"/></g>
<g fill="#3478be"><path d="M705,190 L865,330 L705,470 Z"/><path d="M705,500 L865,640 L705,780 Z"/></g></svg>
<svg class="r" style="left:10px;top:834px" width="44" height="44" viewBox="0 0 952 952"><g fill="#3478be"><rect x="390" y="305" width="215" height="95"/><path d="M600,210 L760,350 L600,495 Z"/><rect x="185" y="305" width="55" height="95"/><rect x="285" y="305" width="60" height="95"/>
<path d="M130,612 L275,475 L275,750 Z"/><rect x="270" y="565" width="220" height="100"/><rect x="540" y="565" width="60" height="100"/><rect x="650" y="565" width="60" height="100"/></g></svg>
<svg class="r" style="left:10px;top:905px" width="44" height="37" viewBox="0 0 891 749"><g fill="#3478be"><rect x="165" y="265" width="545" height="100"/><rect x="165" y="265" width="55" height="500"/><rect x="655" y="265" width="55" height="500"/>
<circle cx="292" cy="432" r="30"/><circle cx="292" cy="530" r="30"/><circle cx="292" cy="628" r="30"/><circle cx="292" cy="725" r="30"/>
<rect x="365" y="410" width="245" height="45"/><rect x="365" y="508" width="245" height="45"/><rect x="365" y="606" width="245" height="45"/><rect x="365" y="703" width="245" height="45"/></g></svg>
<svg class="r" style="left:16px;top:176px" width="28" height="32" viewBox="0 0 833 952"><path d="M125,210 L470,210 L620,360 L620,830 L125,830 Z" fill="#fdfdfd" stroke="#8e98a6" stroke-width="40"/>
<path d="M470,210 L470,360 L620,360" fill="#d6dce6" stroke="#4a5a86" stroke-width="40"/>
<g transform="translate(490,650)"><circle r="190" fill="#3a3a3a"/><g fill="#3a3a3a"><rect x="-55" y="-250" width="110" height="500"/><rect x="-250" y="-55" width="500" height="110"/><rect x="-55" y="-250" width="110" height="500" transform="rotate(45)"/><rect x="-55" y="-250" width="110" height="500" transform="rotate(-45)"/></g><circle r="80" fill="#c9ddf6"/></g></svg>
<svg class="r" style="left:166px;top:176px" width="30" height="32" viewBox="0 0 892 952"><path d="M245,215 L600,215 L760,370 L760,840 L245,840 Z" fill="#fbfbfd" stroke="#5d6b8c" stroke-width="45"/>
<path d="M600,215 L600,370 L760,370" fill="#dfe4ee" stroke="#4b5a86" stroke-width="35"/>
<g transform="translate(285,335)"><circle r="180" fill="#f6b73c"/><circle r="95" fill="#f39a1a"/><circle r="40" fill="#ffe9b0"/></g></svg>
<svg class="r" style="left:324px;top:176px" width="32" height="32" viewBox="0 0 952 952"><g fill="none" stroke="#3a8de0" stroke-width="85"><path d="M300,380 C380,200 620,200 700,420"/><path d="M680,640 C600,820 360,820 260,600"/></g>
<path d="M560,470 L800,300 L790,540 Z" fill="#3a8de0"/><path d="M390,500 L170,480 L190,720 Z" fill="#3a8de0"/></svg>
<svg class="r" style="left:430px;top:176px" width="32" height="32" viewBox="0 0 952 952"><rect x="320" y="190" width="400" height="260" fill="#fdfdfd" stroke="#999" stroke-width="20"/>
<rect x="160" y="400" width="720" height="310" rx="40" fill="#d5d5d5" stroke="#8a8a8a" stroke-width="25"/>
<rect x="320" y="440" width="400" height="110" fill="#555"/><rect x="300" y="600" width="440" height="100" fill="#444"/>
<rect x="320" y="700" width="400" height="160" fill="#fdfdfd" stroke="#999" stroke-width="20"/></svg>
<svg class="r" style="left:528px;top:176px" width="28" height="32" viewBox="0 0 833 952"><path d="M215,670 L500,395" stroke="#222" stroke-width="110" stroke-linecap="round"/>
<path d="M470,440 C400,330 450,230 600,215 L520,320 L560,385 L665,345 C640,460 560,490 470,440 Z" fill="#222"/></svg>
<svg class="r" style="left:668px;top:176px" width="28" height="32" viewBox="0 0 833 952"><rect x="170" y="250" width="490" height="445" fill="#1a1a1a"/>
<rect x="295" y="295" width="250" height="145" fill="#dfe9f7"/><rect x="295" y="510" width="250" height="170" fill="#dfe9f7"/>
<g fill="#cfe3f5"><rect x="200" y="295" width="50" height="45"/><rect x="200" y="385" width="50" height="45"/><rect x="200" y="475" width="50" height="45"/><rect x="200" y="560" width="50" height="45"/><rect x="200" y="630" width="50" height="45"/>
<rect x="585" y="295" width="50" height="45"/><rect x="585" y="385" width="50" height="45"/><rect x="585" y="475" width="50" height="45"/><rect x="585" y="560" width="50" height="45"/><rect x="585" y="630" width="50" height="45"/></g></svg>
<div class="r" style="left:1899px;top:124px;width:21px;height:826px;background:#f1f1f1;"></div>
<div class="r" style="left:1901px;top:146px;width:17px;height:185px;background:#c1c1c1;"></div>
<svg class="r" style="left:1904px;top:132px" width="11" height="6"><path d="M0 6H10L5 0Z" fill="#a3a3a3"/></svg>
<svg class="r" style="left:1905px;top:935px" width="11" height="6"><path d="M0 0H10L5 6Z" fill="#333"/></svg>
<div class="r" style="left:0px;top:950px;width:1920px;height:1px;background:#707070;"></div>
<div class="r" style="left:0px;top:951px;width:1920px;height:1px;background:#ececec;"></div>
</body></html>
